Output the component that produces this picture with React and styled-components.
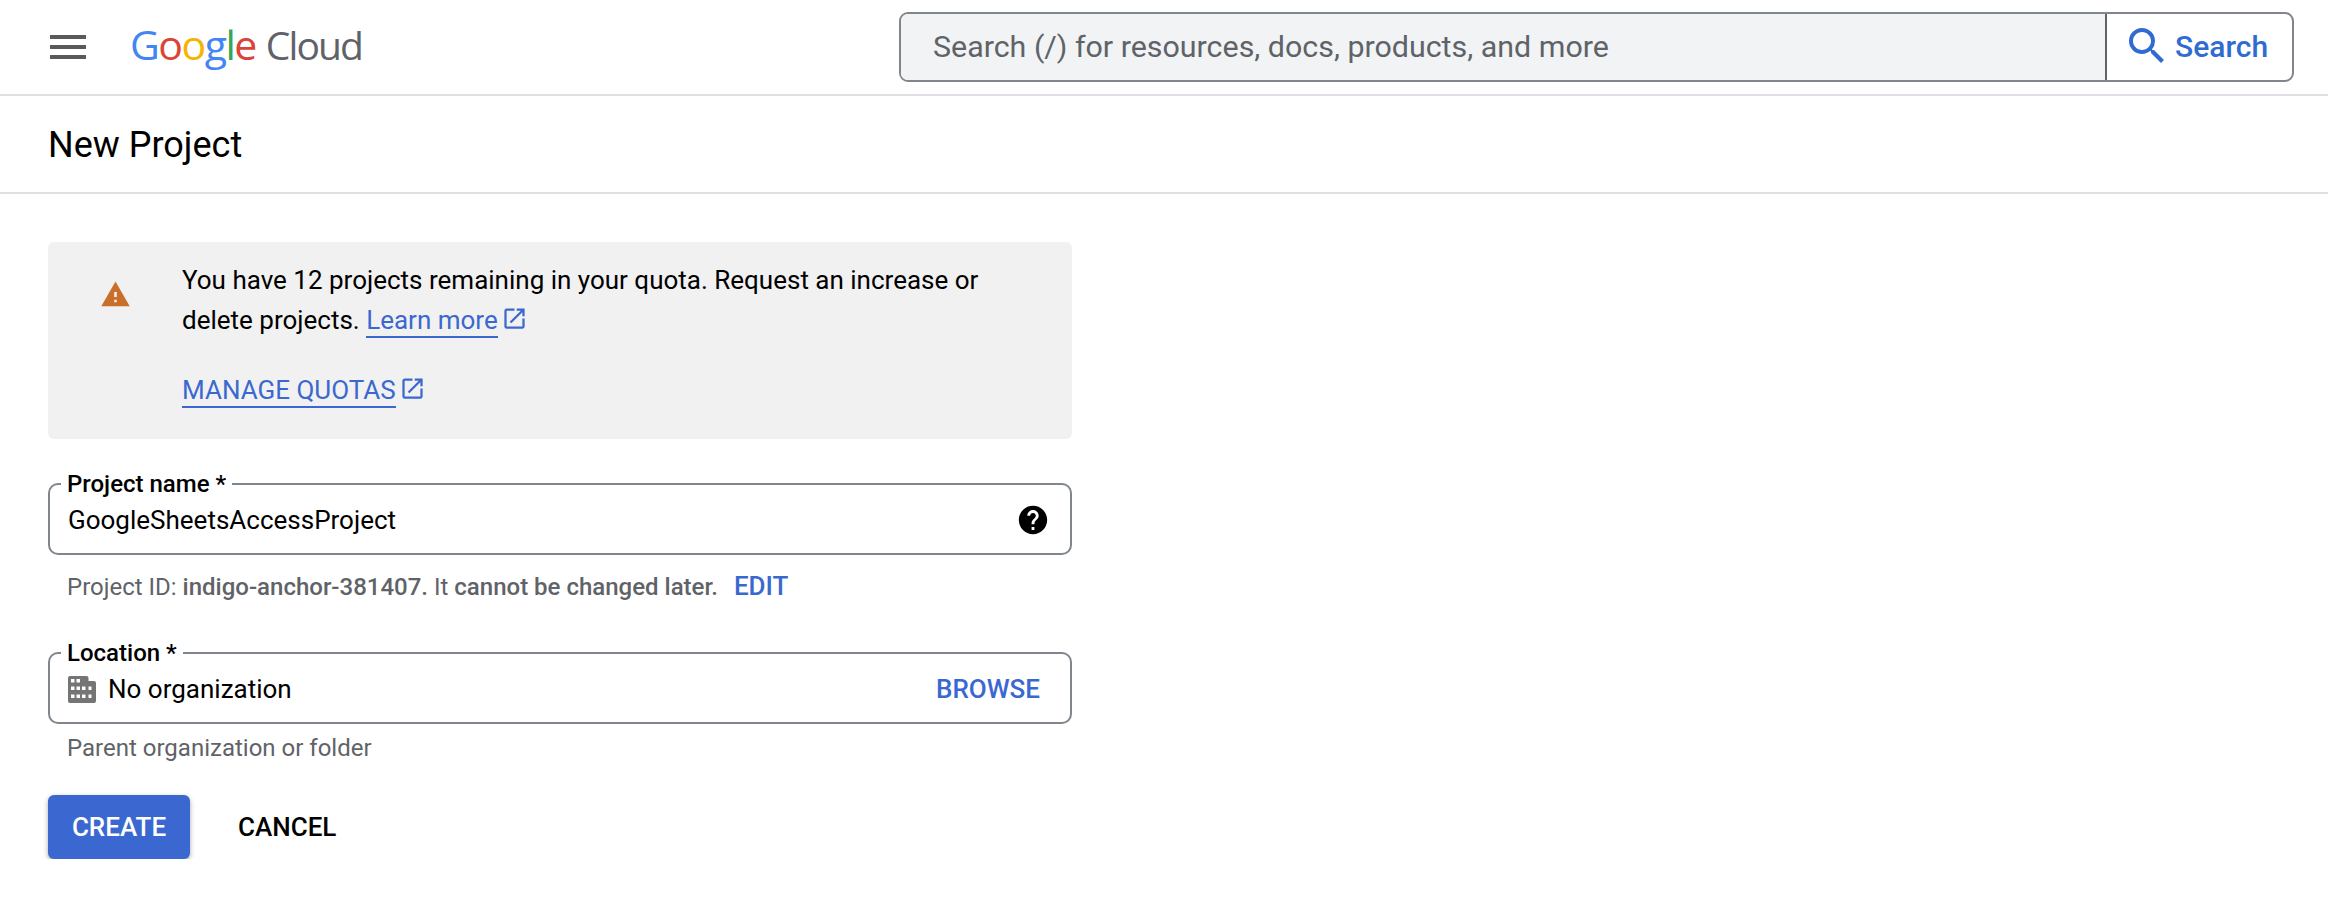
import React from 'react';
import styled, { createGlobalStyle } from 'styled-components';

const GlobalStyle = createGlobalStyle`
  html, body {
    margin: 0;
    background: #fff;
    font-family: Roboto, "Liberation Sans", sans-serif;
    color: #000;
  }
`
const Header = styled.header`
  display: flex;
  align-items: center;
  height: 94px;
  border-bottom: 2px solid #dfdfe4;
  padding: 0 34px 0 50px;
`
const MenuButton = styled.div`
  display: flex;
  flex-direction: column;
  gap: 6px;
  width: 36px;
  span {
    height: 4px;
    background: #5a5a5a;
  }
`
const Logo = styled.div`
  display: flex;
  align-items: baseline;
  margin: -5px 0 0 44px;
  font-family: "Open Sans", sans-serif;
  font-size: 41px;
  font-weight: 500;
  letter-spacing: -1.5px;
  line-height: 1;
`
const LogoLetter = styled.span`
  color: ${(p) => p.$color};
`
const LogoCloud = styled.span`
  color: #5f6368;
  margin-left: 10px;
  font-size: 39px;
  font-weight: 400;
  letter-spacing: -1.9px;
`
const SearchBar = styled.div`
  display: flex;
  margin-left: auto;
  width: 1395px;
  height: 70px;
  box-sizing: border-box;
  border: 2px solid #80868b;
  border-radius: 9px;
  overflow: hidden;
`
const SearchInput = styled.div`
  flex: 1;
  display: flex;
  align-items: center;
  padding: 0 0 2px 32px;
  background: #f1f3f4;
  border-right: 2px solid #5f6368;
  color: #5f6368;
  font-size: 30.4px;
`
const SearchButton = styled.div`
  display: flex;
  align-items: center;
  width: 185px;
  padding: 0 0 2px 16px;
  box-sizing: border-box;
  color: #2f6bd1;
  font-size: 30px;
  font-weight: 500;
  svg {
    margin-right: 4px;
    flex: none;
  }
`
const TitleBar = styled.div`
  display: flex;
  align-items: center;
  height: 94px;
  padding: 2px 0 0 48px;
  border-bottom: 2px solid #dfdfe4;
`
const Title = styled.h1`
  margin: 0;
  font-size: 36px;
  font-weight: 400;
`
const Form = styled.main`
  width: 1024px;
  margin: 48px 0 0 48px;
`
const Banner = styled.section`
  display: flex;
  height: 197px;
  box-sizing: border-box;
  background: #f1f1f1;
  border-radius: 6px;
  padding: 18px 84px 0 0;
`
const BannerIcon = styled.div`
  width: 134px;
  display: flex;
  justify-content: center;
  padding-top: 19px;
  svg {
    width: 31px;
    height: 31px;
    fill: #c96f2a;
  }
`
const BannerText = styled.div`
  flex: 1;
  font-size: 26px;
  line-height: 40px;
`
const Link = styled.a`
  color: #3b68d0;
  text-decoration: none;
  border-bottom: 2px solid #3b68d0;
  padding-bottom: 1px;
`
const OpenIcon = styled.svg`
  width: 27px;
  height: 27px;
  fill: #3b68d0;
  margin-left: 3px;
  vertical-align: -3px;
`
const Quotas = styled.div`
  margin-top: 30px;
`
const Field = styled.fieldset`
  margin: ${(p) => p.$top}px 0 0;
  padding: 0 18px;
  min-width: 0;
  height: 83px;
  box-sizing: border-box;
  border: 2px solid #80868b;
  border-radius: 10px;
  display: flex;
  align-items: center;
`
const FieldLabel = styled.legend`
  margin-left: -7px;
  padding: 0 6px;
  font-size: 24px;
  line-height: 24px;
  font-weight: 500;
`
const FieldRow = styled.div`
  display: flex;
  align-items: center;
  width: 100%;
  height: 46px;
  margin-top: -9px;
  font-size: 26px;
`
const Domain = styled.svg`
  width: 28px;
  height: 27px;
  fill: #757575;
  margin: 0 12px 0 0;
  flex: none;
`
const Help = styled.svg`
  width: 34px;
  height: 34px;
  margin-left: auto;
  margin-right: 2px;
  flex: none;
`
const BlueAction = styled.span`
  color: #3b68d0;
  font-weight: 500;
  font-size: 26px;
  margin-left: ${(p) => p.$left};
  margin-right: ${(p) => p.$right || '0'};
`
const Hint = styled.p`
  margin: ${(p) => p.$top}px 0 0 19px;
  font-size: 24px;
  line-height: 26px;
  color: #5f6368;
  b {
    font-weight: 500;
  }
`
const Actions = styled.div`
  display: flex;
  align-items: center;
  margin-top: 34px;
`
const PrimaryButton = styled.button`
  width: 142px;
  height: 64px;
  border: none;
  border-radius: 6px;
  background: #3b68d0;
  color: #fff;
  font-family: inherit;
  font-size: 26px;
  font-weight: 500;
  box-shadow: 0 2px 5px rgba(0, 0, 0, 0.35);
`
const GhostButton = styled.button`
  margin-left: 48px;
  padding: 0;
  border: none;
  background: none;
  color: #000;
  font-family: inherit;
  font-size: 26px;
  font-weight: 500;
`

const googleLetters = [
  ['G', '#4285f4'],
  ['o', '#db4437'],
  ['o', '#f4b400'],
  ['g', '#4285f4'],
  ['l', '#34a853'],
  ['e', '#db4437'],
]

const OpenInNew = () => (
  <OpenIcon viewBox="0 0 24 24">
    <path d="M19 19H5V5h7V3H5c-1.11 0-2 .9-2 2v14c0 1.1.89 2 2 2h14c1.1 0 2-.9 2-2v-7h-2v7zM14 3v2h3.59l-9.83 9.83 1.41 1.41L19 6.41V10h2V3h-7z" />
  </OpenIcon>
)

function App() {
  return (
    <div>
      <GlobalStyle />
      <Header>
        <MenuButton><span /><span /><span /></MenuButton>
        <Logo>
          {googleLetters.map(([letter, color], i) => (
            <LogoLetter key={i} $color={color}>{letter}</LogoLetter>
          ))}
          <LogoCloud>Cloud</LogoCloud>
        </Logo>
        <SearchBar>
          <SearchInput>Search (/) for resources, docs, products, and more</SearchInput>
          <SearchButton>
            <svg width="48" height="48" viewBox="0 0 24 24" fill="currentColor">
              <path d="M15.5 14h-.79l-.28-.27A6.471 6.471 0 0 0 16 9.5 6.5 6.5 0 1 0 9.5 16c1.61 0 3.09-.59 4.23-1.57l.27.28v.79l5 4.99L20.49 19l-4.99-5zm-6 0C7.01 14 5 11.99 5 9.5S7.01 5 9.5 5 14 7.01 14 9.5 11.99 14 9.5 14z" />
            </svg>
            Search
          </SearchButton>
        </SearchBar>
      </Header>
      <TitleBar>
        <Title>New Project</Title>
      </TitleBar>
      <Form>
        <Banner>
          <BannerIcon>
            <svg viewBox="0 0 24 24"><path d="M1 21h22L12 2 1 21zm12-3h-2v-2h2v2zm0-4h-2v-4h2v4z" /></svg>
          </BannerIcon>
          <BannerText>
            You have 12 projects remaining in your quota. Request an increase or delete projects.{' '}
            <Link>Learn more</Link><OpenInNew />
            <Quotas><Link>MANAGE QUOTAS</Link><OpenInNew /></Quotas>
          </BannerText>
        </Banner>
        <Field $top={33}>
          <FieldLabel>Project name *</FieldLabel>
          <FieldRow>
            GoogleSheetsAccessProject
            <Help viewBox="0 0 24 24">
              <path d="M12 2C6.48 2 2 6.48 2 12s4.48 10 10 10 10-4.48 10-10S17.52 2 12 2zm1 17h-2v-2h2v2zm2.07-7.75l-.9.92C13.45 12.9 13 13.5 13 15h-2v-.5c0-1.1.45-2.1 1.17-2.83l1.24-1.26c.37-.36.59-.86.59-1.41 0-1.1-.9-2-2-2s-2 .9-2 2H8c0-2.21 1.79-4 4-4s4 1.79 4 4c0 .88-.36 1.68-.93 2.25z" />
            </Help>
          </FieldRow>
        </Field>
        <Hint $top={18}>
          Project ID: <b>indigo-anchor-381407.</b> It <b>cannot be changed later.</b>
          <BlueAction $left="16px">EDIT</BlueAction>
        </Hint>
        <Field $top={41}>
          <FieldLabel>Location *</FieldLabel>
          <FieldRow>
            <Domain viewBox="0 0 28 27">
              <path
                fillRule="evenodd"
                d="M2 0h16.5a2 2 0 0 1 2 2v3H26a2 2 0 0 1 2 2v18a2 2 0 0 1-2 2H2a2 2 0 0 1-2-2V2a2 2 0 0 1 2-2zM3 3v3.5h3.5V3zM8.5 3v3.5H12V3zM3 10.5V14h3.5v-3.5zM8.5 10.5V14H12v-3.5zM14 10.5V14h3.5v-3.5zM20.5 10.5V14h3v-3.5zM3 18.5V22h3.5v-3.5zM8.5 18.5V22H12v-3.5zM14 18.5V22h3.5v-3.5zM20.5 18.5V22h3v-3.5z"
              />
            </Domain>
            No organization
            <BlueAction $left="auto" $right="12px">BROWSE</BlueAction>
          </FieldRow>
        </Field>
        <Hint $top={11}>Parent organization or folder</Hint>
        <Actions>
          <PrimaryButton>CREATE</PrimaryButton>
          <GhostButton>CANCEL</GhostButton>
        </Actions>
      </Form>
    </div>
  );
}

export default App;
